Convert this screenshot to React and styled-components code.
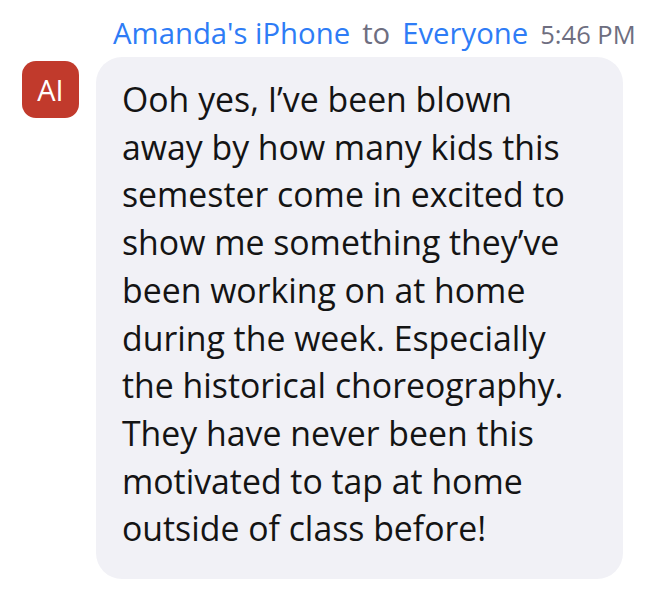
import React from "react";
import styled, { createGlobalStyle } from "styled-components";

const GlobalStyle = createGlobalStyle`
  html, body {
    margin: 0;
    padding: 0;
    background: #ffffff;
  }
  body {
    font-family: "Open Sans", "Noto Sans", sans-serif;
  }
`;

const Page = styled.div`
  width: 653px;
  height: 596px;
  box-sizing: border-box;
  padding: 13px 20px 0 22px;
  display: flex;
  flex-direction: column;
`;

const Header = styled.div`
  display: flex;
  align-items: baseline;
  gap: 12px;
  padding-left: 91px;
  height: 44px;
  white-space: nowrap;
`;

const Names = styled.span`
  display: flex;
  align-items: baseline;
  gap: 12px;
  font-size: 29.3px;
`;

const Name = styled.span`
  color: #2e7cf6;
`;

const To = styled.span`
  color: #6e6e80;
`;

const Time = styled.span`
  color: #6e6e80;
  font-size: 25.5px;
`;

const Row = styled.div`
  display: flex;
  align-items: flex-start;
  gap: 17px;
`;

const Avatar = styled.div`
  width: 57px;
  height: 57px;
  margin-top: 4px;
  border-radius: 14px;
  background: #c13a2c;
  color: #ffffff;
  font-size: 29px;
  display: flex;
  align-items: center;
  justify-content: center;
  flex-shrink: 0;
`;

const Bubble = styled.div`
  width: 527px;
  box-sizing: border-box;
  background: #f1f1f6;
  border-radius: 26px;
  padding: 19px 16px 26px 26px;
  color: #141414;
  font-size: 33.8px;
  line-height: 47.7px;
  white-space: nowrap;
`;

export default function App() {
  return (
    <>
      <GlobalStyle />
      <Page>
        <Header>
          <Names>
            <Name>Amanda's iPhone</Name>
            <To>to</To>
            <Name>Everyone</Name>
          </Names>
          <Time>5:46 PM</Time>
        </Header>
        <Row>
          <Avatar>AI</Avatar>
          <Bubble>
            Ooh yes, I’ve been blown<br />
            away by how many kids this<br />
            semester come in excited to<br />
            show me something they’ve<br />
            been working on at home<br />
            during the week. Especially<br />
            the historical choreography.<br />
            They have never been this<br />
            motivated to tap at home<br />
            outside of class before!
          </Bubble>
        </Row>
      </Page>
    </>
  );
}
